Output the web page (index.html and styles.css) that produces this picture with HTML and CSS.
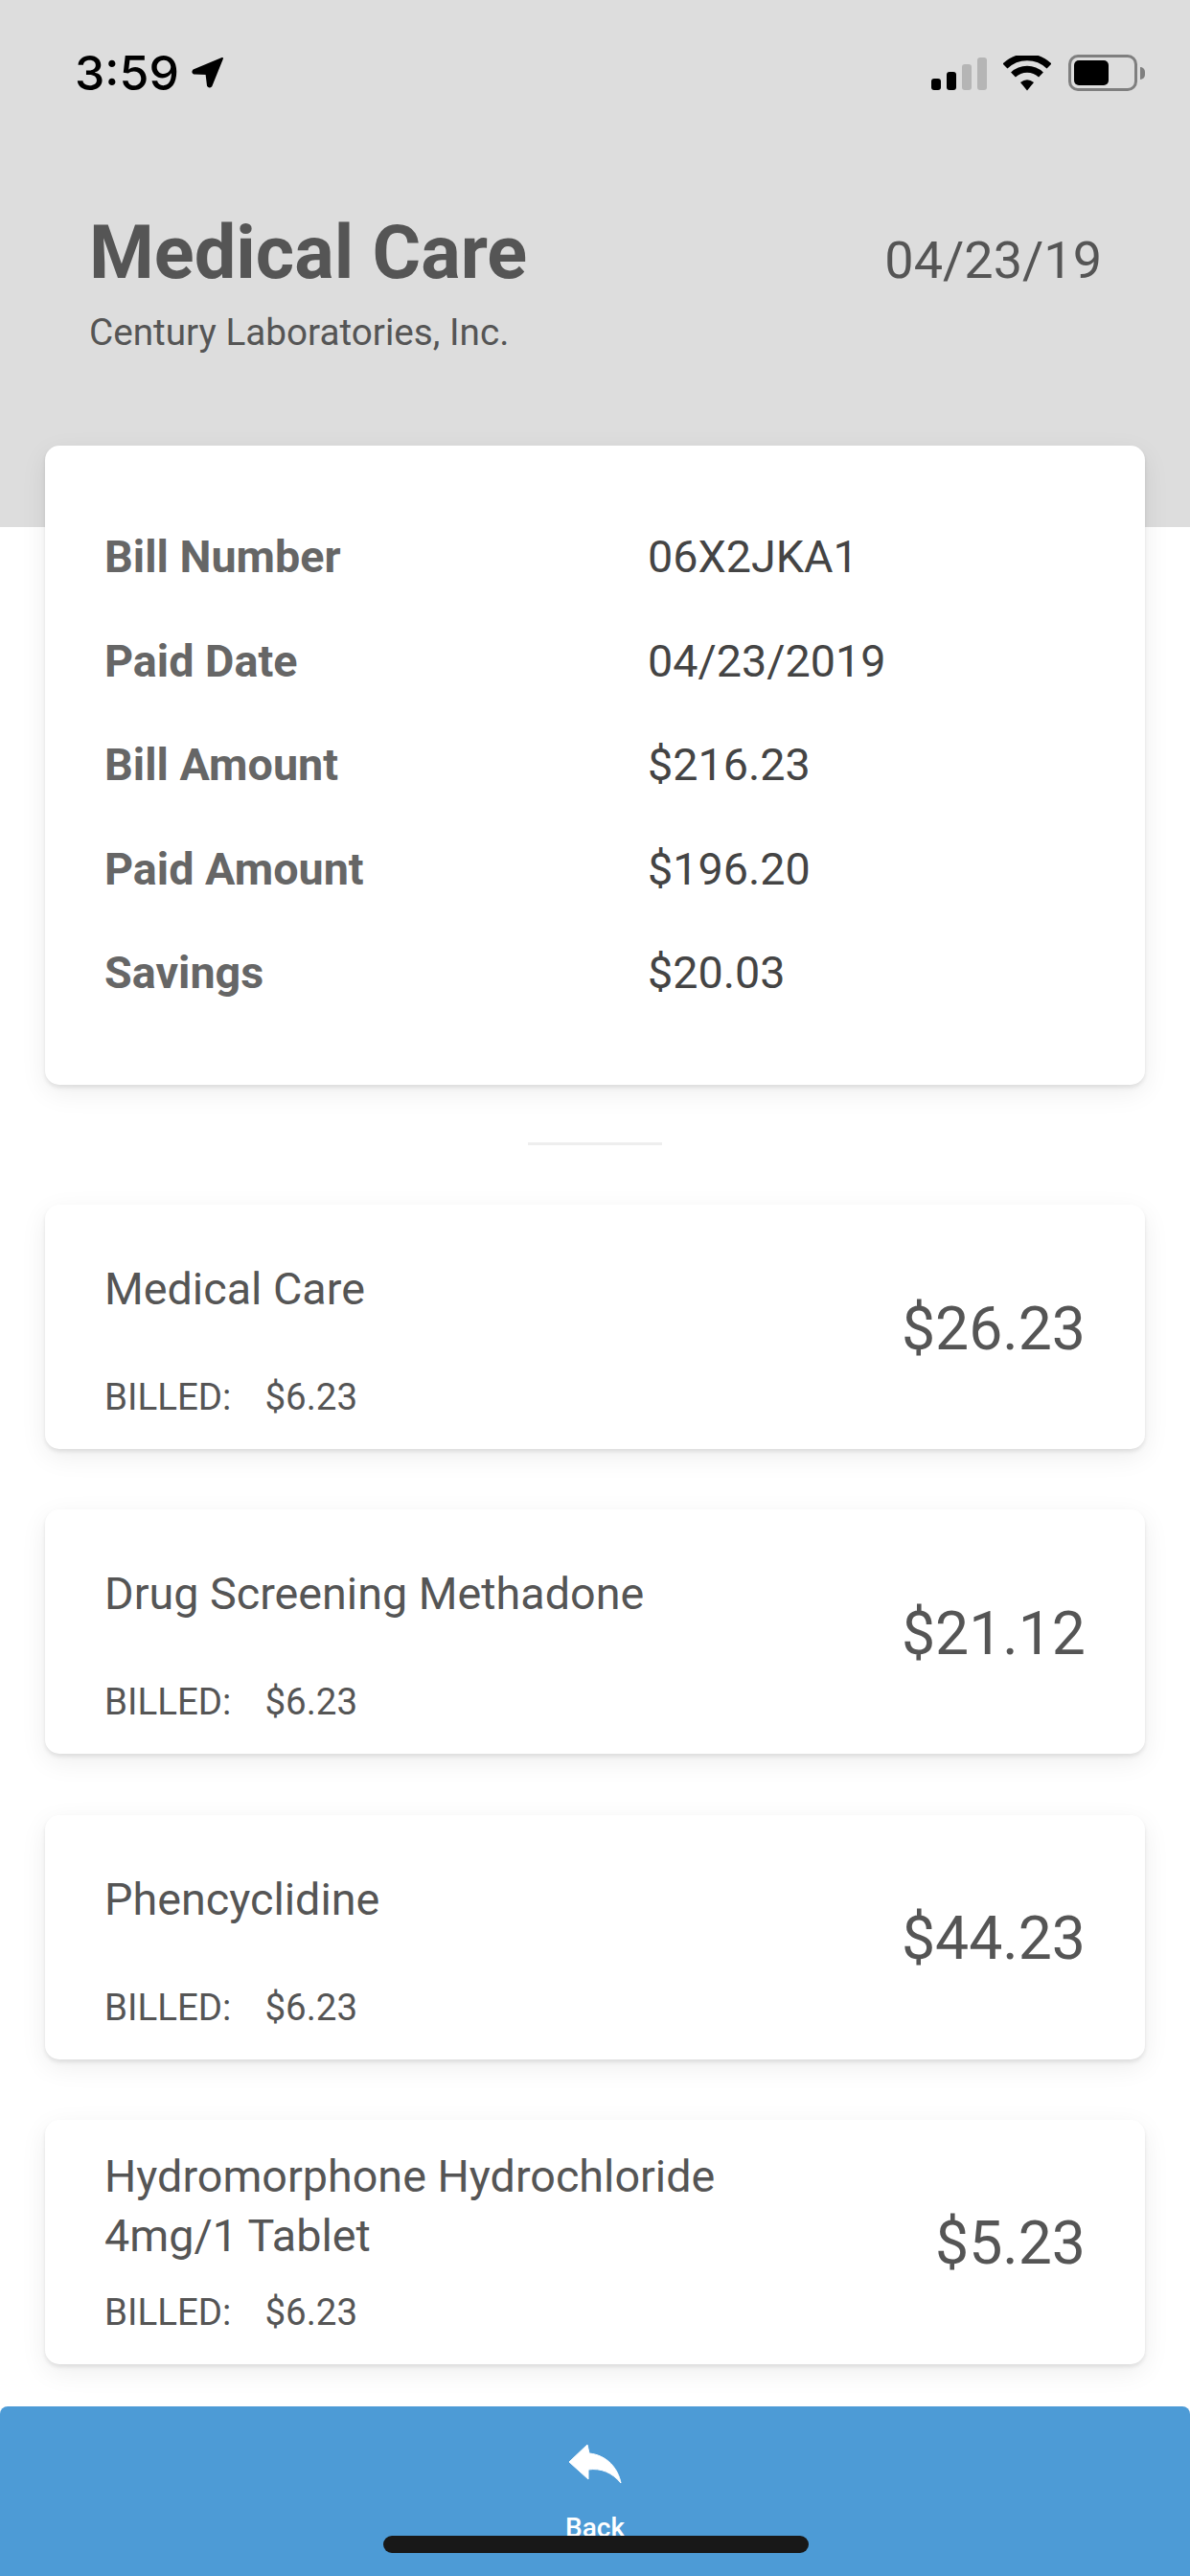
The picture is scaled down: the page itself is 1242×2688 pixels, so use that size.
FILE: index.html
```html
<!DOCTYPE html>
<html lang="en">
<head>
    <meta charset="UTF-8">
    <meta name="viewport" content="width=device-width, initial-scale=1.0">
    <title>Medical Care</title>
    <link rel="stylesheet" href="styles.css">
</head>
<body>
    <div class="page">
        <!-- Header -->
        <header class="header">
            <div class="status">
                <div class="status-time">
                    <span>3:59</span>
                    <svg class="arrow" width="34" height="34" viewBox="0 0 34 34"><path d="M32 2 L2 14.500 Q0.500 16.500 2.500 17.500 L15.500 18 L17 30.500 Q18.500 32.500 20.500 30.500 Z" fill="#000" stroke="#000" stroke-width="2" stroke-linejoin="round"/></svg>
                </div>
                <div class="status-icons">
                    <div class="signal">
                        <i class="bar-1"></i>
                        <i class="bar-2"></i>
                        <i class="bar-3"></i>
                        <i class="bar-4"></i>
                    </div>
                    <svg width="50" height="37" viewBox="0 0 50 37"><path d="M2 11 A33 33 0 0 1 48 11" fill="none" stroke="#000" stroke-width="7"/><path d="M10.500 20 A21 21 0 0 1 39.500 20" fill="none" stroke="#000" stroke-width="7"/><path d="M18 28 Q25 22.500 32 28 L25 36.500 Z" fill="#000"/></svg>
                    <div class="battery">
                        <div class="battery-body"><div class="battery-level"></div></div>
                        <div class="battery-cap"></div>
                    </div>
                </div>
            </div>
            <div class="title-row">
                <div>
                    <h1>Medical Care</h1>
                    <p class="company">Century Laboratories, Inc.</p>
                </div>
                <div class="date">04/23/19</div>
            </div>
        </header>

        <!-- Bill summary -->
        <section class="card summary">
            <div class="summary-row"><span class="summary-label">Bill Number</span><span class="summary-value">06X2JKA1</span></div>
            <div class="summary-row"><span class="summary-label">Paid Date</span><span class="summary-value">04/23/2019</span></div>
            <div class="summary-row"><span class="summary-label">Bill Amount</span><span class="summary-value">$216.23</span></div>
            <div class="summary-row"><span class="summary-label">Paid Amount</span><span class="summary-value">$196.20</span></div>
            <div class="summary-row"><span class="summary-label">Savings</span><span class="summary-value">$20.03</span></div>
        </section>

        <div class="divider"></div>

        <!-- Items -->
        <div class="items">
            <div class="card item">
                <div class="item-info">
                    <div class="item-name">Medical Care</div>
                    <div class="item-billed"><span>BILLED:</span><span>$6.23</span></div>
                </div>
                <div class="item-price">$26.23</div>
            </div>
            <div class="card item">
                <div class="item-info">
                    <div class="item-name">Drug Screening Methadone</div>
                    <div class="item-billed"><span>BILLED:</span><span>$6.23</span></div>
                </div>
                <div class="item-price">$21.12</div>
            </div>
            <div class="card item">
                <div class="item-info">
                    <div class="item-name">Phencyclidine</div>
                    <div class="item-billed"><span>BILLED:</span><span>$6.23</span></div>
                </div>
                <div class="item-price">$44.23</div>
            </div>
            <div class="card item item-long">
                <div class="item-info">
                    <div class="item-name">Hydromorphone Hydrochloride<br>4mg/1 Tablet</div>
                    <div class="item-billed"><span>BILLED:</span><span>$6.23</span></div>
                </div>
                <div class="item-price">$5.23</div>
            </div>
        </div>

        <!-- Back button -->
        <footer class="footer">
            <svg class="back-icon" width="56" height="44" viewBox="0 0 56 44"><path d="M20 2 L1 20 L21 38 L21 28 C34 26 46 31 55 42 C52 27 41 13 22 11 Z" fill="#fff" stroke="#fff" stroke-width="1" stroke-linejoin="round"/></svg>
            <div class="back-label">Back</div>
            <div class="home-bar"></div>
        </footer>
    </div>
</body>
</html>
```

FILE: styles.css
```css
*{
    margin: 0;
    padding: 0;
    box-sizing: border-box;
}

body{
    background: #fff;
    font-family: Roboto, sans-serif;
    color: #555;
}

.page{
    width: 1242px;
    height: 2688px;
    overflow: hidden;
    display: flex;
    flex-direction: column;
}

/* Header */
.header{
    background: #ddd;
    height: 550px;
    padding: 0 47px;
    flex-shrink: 0;
}

.status{
    display: flex;
    justify-content: space-between;
    align-items: center;
    height: 150px;
    padding: 2px 0 0 31px;
}

.status-time{
    display: flex;
    align-items: center;
    gap: 13px;
    font-family: Inter, sans-serif;
    font-weight: 500;
    font-size: 50px;
    color: #000;
}

.status-icons{
    display: flex;
    align-items: center;
    gap: 18px;
}

.signal{
    display: flex;
    align-items: flex-end;
    gap: 6px;
    height: 36px;
    margin-right: -1px;
}

.signal i{
    display: block;
    width: 10px;
    border-radius: 3px;
    background: #000;
}

.bar-1{ height: 12px; }
.bar-2{ height: 19px; }
.signal .bar-3{ height: 27px; background: #b5b5b5; }
.signal .bar-4{ height: 34px; background: #b5b5b5; }

.battery{
    display: flex;
    align-items: center;
    gap: 3px;
}

.battery-body{
    width: 72px;
    height: 38px;
    border: 3px solid #7f7f7f;
    border-radius: 10px;
    padding: 3px;
}

.battery-level{
    width: 36px;
    height: 100%;
    background: #000;
    border-radius: 5px;
}

.battery-cap{
    width: 5px;
    height: 13px;
    background: #7f7f7f;
    border-radius: 0 6px 6px 0;
}

.title-row{
    display: flex;
    justify-content: space-between;
    align-items: flex-start;
    padding: 69px 45px 0 46px;
}

h1{
    font-size: 77.500px;
    line-height: 90px;
    font-weight: 700;
}

.company{
    font-size: 38.700px;
    line-height: 46px;
    margin-top: 15px;
}

.date{
    font-size: 54px;
    line-height: 64px;
    margin-top: 21px;
}

/* Cards */
.card{
    background: #fff;
    margin: 0 47px;
    border-radius: 15px;
    box-shadow: 0 3px 4px rgba(0, 0, 0, 0.09), 0 8px 28px rgba(0, 0, 0, 0.07);
}

.summary{
    height: 667px;
    margin-top: -85px;
    padding: 62px 63px 0 62px;
    position: relative;
}

.summary-row{
    display: flex;
    align-items: center;
    height: 108.500px;
    font-size: 46.700px;
}

.summary-label{
    width: 567px;
    font-weight: 700;
    color: #666;
}

.summary-value{
    color: #444;
}

.divider{
    width: 140px;
    height: 3px;
    background: #eee;
    margin: 60px auto 62px;
    flex-shrink: 0;
}

/* Items */
.items{
    display: flex;
    flex-direction: column;
    gap: 63.330px;
}

.item{
    height: 255px;
    padding: 0 62px;
    display: flex;
    justify-content: space-between;
    align-items: center;
}

.item-info{
    height: 100%;
    display: flex;
    flex-direction: column;
    justify-content: space-between;
    padding: 57px 0 31px;
}

.item-long .item-info{
    padding-top: 28px;
}

.item-name{
    font-size: 46.700px;
    line-height: 62px;
}

.item-billed{
    display: flex;
    gap: 35px;
    font-size: 38.500px;
    line-height: 46px;
}

.item-price{
    font-size: 62.500px;
    color: #555;
    padding-top: 3px;
}

/* Footer */
.footer{
    margin-top: 44px;
    height: 177px;
    flex-shrink: 0;
    background: #4d9bd6;
    border-radius: 8px 8px 0 0;
    position: relative;
    display: flex;
    flex-direction: column;
    align-items: center;
    padding-top: 38px;
}

.back-label{
    color: #fff;
    font-size: 28px;
    line-height: 32px;
    font-weight: 500;
    margin-top: 29px;
}

.home-bar{
    position: absolute;
    left: 400px;
    top: 135px;
    width: 444px;
    height: 18px;
    background: #181818;
    border-radius: 9px;
}
```
